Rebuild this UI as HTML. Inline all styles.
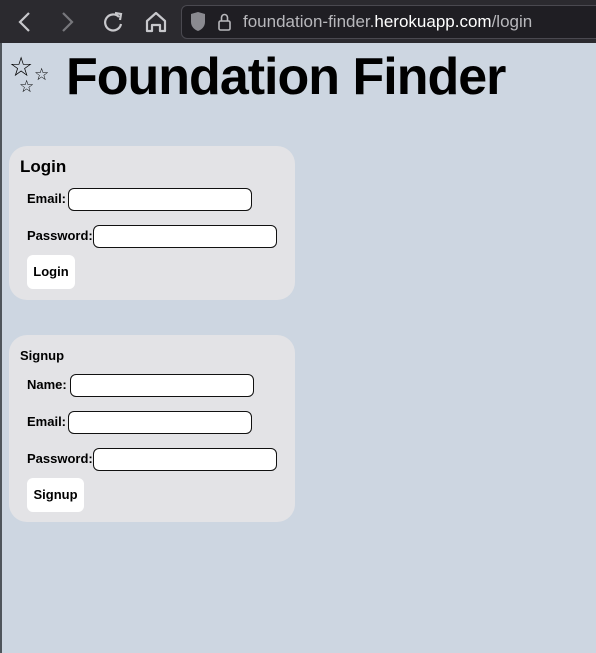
<!DOCTYPE html>
<html><head><meta charset="utf-8"><style>
*{margin:0;padding:0;box-sizing:border-box}
body{width:596px;height:653px;background:#cdd6e1;position:relative;overflow:hidden;font-family:"Liberation Sans",sans-serif;color:#000}
.bar{position:absolute;left:0;top:0;width:596px;height:43px;background:#2b2a2f}
.strip{position:absolute;left:0;top:43px;width:2px;height:610px;background:#4f555b}
.url{position:absolute;left:181px;top:5px;width:430px;height:34px;border:1px solid #4a4950;border-radius:6px;background:#1f1e23}
.urltxt{position:absolute;left:243px;top:12px;font-size:17px;color:#b8b8bc;white-space:nowrap}
.urltxt b{color:#fff;font-weight:normal}
.a{position:absolute}
h1{position:absolute;left:66px;top:47px;font-size:52px;font-weight:bold;letter-spacing:-1px;white-space:nowrap}
.card{position:absolute;left:9px;width:286px;background:#e3e3e6;border-radius:18px}
.lbl{position:absolute;font-size:13px;font-weight:bold;white-space:nowrap}
.inp{position:absolute;width:184px;height:23px;background:#fff;border:1px solid #111;border-radius:6px}
.btn{position:absolute;background:#fff;border-radius:6px;font-size:13px;font-weight:bold;text-align:center;line-height:34px;height:34px}
</style></head><body>
<div class="bar"></div>
<svg class="a" style="left:0;top:0" width="180" height="43">
<path d="M29 13 L20 22 L29 31" stroke="#c8c8cc" stroke-width="2.2" fill="none"/>
<path d="M63 13 L72 22 L63 31" stroke="#77777c" stroke-width="2.2" fill="none"/>
<path d="M119 17 A8 8 0 1 0 121 24" stroke="#c8c8cc" stroke-width="2.2" fill="none"/>
<path d="M115 13 L121 14 L120 20" stroke="#c8c8cc" stroke-width="2.2" fill="none"/>
<path d="M147 31 V21 L156 13 L165 21 V31 H160 V25 H152 V31 Z" stroke="#c8c8cc" stroke-width="2.2" fill="none" stroke-linejoin="round"/>
</svg>
<div class="url"></div>
<svg class="a" style="left:188px;top:10px" width="50" height="24">
<path d="M3 4 L10 2 L17 4 V12 C17 17 13 20 10 21 C7 20 3 17 3 12 Z" fill="#8a8a90"/>
<rect x="31" y="11" width="11" height="9" rx="1.5" stroke="#b8b8bc" stroke-width="1.6" fill="none"/>
<path d="M33.5 11 V7.5 A3 3 0 0 1 39.5 7.5 V11" stroke="#b8b8bc" stroke-width="1.6" fill="none"/>
</svg>
<div class="urltxt">foundation-finder.<b>herokuapp.com</b>/login</div>
<div class="strip"></div>
<div class="a" style="left:9px;top:54px;font-size:27px;line-height:27px">☆</div>
<div class="a" style="left:34px;top:66px;font-size:17px;line-height:17px">☆</div>
<div class="a" style="left:19px;top:78px;font-size:17px;line-height:17px">☆</div>
<h1>Foundation Finder</h1>

<div class="card" style="top:146px;height:154px"></div>
<div class="lbl" style="left:20px;top:157px;font-size:17px">Login</div>
<div class="lbl" style="left:27px;top:191px">Email:</div>
<div class="inp" style="left:68px;top:188px"></div>
<div class="lbl" style="left:27px;top:228px">Password:</div>
<div class="inp" style="left:93px;top:225px"></div>
<div class="btn" style="left:27px;top:255px;width:48px">Login</div>

<div class="card" style="top:335px;height:187px"></div>
<div class="lbl" style="left:20px;top:348px">Signup</div>
<div class="lbl" style="left:27px;top:377px">Name:</div>
<div class="inp" style="left:70px;top:374px"></div>
<div class="lbl" style="left:27px;top:414px">Email:</div>
<div class="inp" style="left:68px;top:411px"></div>
<div class="lbl" style="left:27px;top:451px">Password:</div>
<div class="inp" style="left:93px;top:448px"></div>
<div class="btn" style="left:27px;top:478px;width:57px">Signup</div>
</body></html>
